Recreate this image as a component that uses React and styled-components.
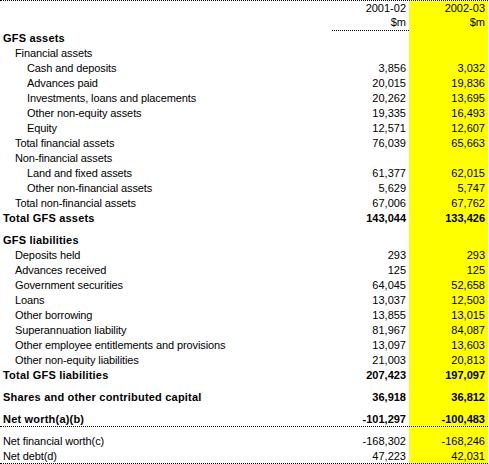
import React from "react";
import styled, { createGlobalStyle } from "styled-components";

const GlobalStyle = createGlobalStyle`
  html, body {
    margin: 0;
    padding: 0;
    background: #ffffff;
  }
  body {
    font-family: "Liberation Sans", Arial, sans-serif;
    font-size: 11px;
    color: #000000;
  }
`;

const rows = [
  { label: "GFS assets", bold: true },
  { label: "Financial assets", indent: 1 },
  { label: "Cash and deposits", indent: 2, a: "3,856", b: "3,032" },
  { label: "Advances paid", indent: 2, a: "20,015", b: "19,836" },
  { label: "Investments, loans and placements", indent: 2, a: "20,262", b: "13,695" },
  { label: "Other non-equity assets", indent: 2, a: "19,335", b: "16,493" },
  { label: "Equity", indent: 2, a: "12,571", b: "12,607" },
  { label: "Total financial assets", indent: 1, a: "76,039", b: "65,663" },
  { label: "Non-financial assets", indent: 1 },
  { label: "Land and fixed assets", indent: 2, a: "61,377", b: "62,015" },
  { label: "Other non-financial assets", indent: 2, a: "5,629", b: "5,747" },
  { label: "Total non-financial assets", indent: 1, a: "67,006", b: "67,762" },
  { label: "Total GFS assets", bold: true, a: "143,044", b: "133,426" },
  { spacer: true },
  { label: "GFS liabilities", bold: true },
  { label: "Deposits held", indent: 1, a: "293", b: "293" },
  { label: "Advances received", indent: 1, a: "125", b: "125" },
  { label: "Government securities", indent: 1, a: "64,045", b: "52,658" },
  { label: "Loans", indent: 1, a: "13,037", b: "12,503" },
  { label: "Other borrowing", indent: 1, a: "13,855", b: "13,015" },
  { label: "Superannuation liability", indent: 1, a: "81,967", b: "84,087" },
  { label: "Other employee entitlements and provisions", indent: 1, a: "13,097", b: "13,603" },
  { label: "Other non-equity liabilities", indent: 1, a: "21,003", b: "20,813" },
  { label: "Total GFS liabilities", bold: true, a: "207,423", b: "197,097" },
  { spacer: true },
  { label: "Shares and other contributed capital", bold: true, a: "36,918", b: "36,812" },
  { spacer: true },
  { label: "Net worth(a)(b)", bold: true, a: "-101,297", b: "-100,483", rule: true },
  { spacer: true },
  { label: "Net financial worth(c)", a: "-168,302", b: "-168,246" },
  { label: "Net debt(d)", a: "47,223", b: "42,031", rule: true },
];

const Sheet = styled.div`
  width: 488px;
  border-top: 1px dotted #000;
`;

const Row = styled.div`
  display: grid;
  grid-template-columns: 332px 77px 79px;
  box-sizing: border-box;
  height: ${(p) => p.$h}px;
  line-height: ${(p) => p.$lh}px;
  font-weight: ${(p) => (p.$bold ? 700 : 400)};
  letter-spacing: ${(p) => (p.$bold ? "0.2px" : "-0.1px")};
  border-bottom: ${(p) => (p.$rule ? "1px dotted #000" : "none")};
`;

const Label = styled.div`
  padding-left: ${(p) => 3 + (p.$indent || 0) * 12}px;
  white-space: nowrap;
`;

const Value = styled.div`
  text-align: right;
  padding-right: 3px;
  white-space: nowrap;
  letter-spacing: 0;
`;

const Current = styled(Value)`
  background: #ffff00;
`;

const Unit = styled(Value)`
  box-sizing: border-box;
  height: 16px;
  border-bottom: 1px dotted #000;
`;

export default function App() {
  return (
    <>
      <GlobalStyle />
      <Sheet>
        <Row $h={14} $lh={14}>
          <Label />
          <Value>2001-02</Value>
          <Current>2002-03</Current>
        </Row>
        <Row $h={16} $lh={15}>
          <Label />
          <Unit>$m</Unit>
          <Current>$m</Current>
        </Row>
        {rows.map((r, i) =>
          r.spacer ? (
            <Row key={i} $h={7} $lh={7}>
              <Label />
              <Value />
              <Current />
            </Row>
          ) : (
            <Row key={i} $h={15} $lh={r.rule ? 14 : 15} $bold={r.bold} $rule={r.rule}>
              <Label $indent={r.indent}>{r.label}</Label>
              <Value>{r.a}</Value>
              <Current>{r.b}</Current>
            </Row>
          )
        )}
      </Sheet>
    </>
  );
}
